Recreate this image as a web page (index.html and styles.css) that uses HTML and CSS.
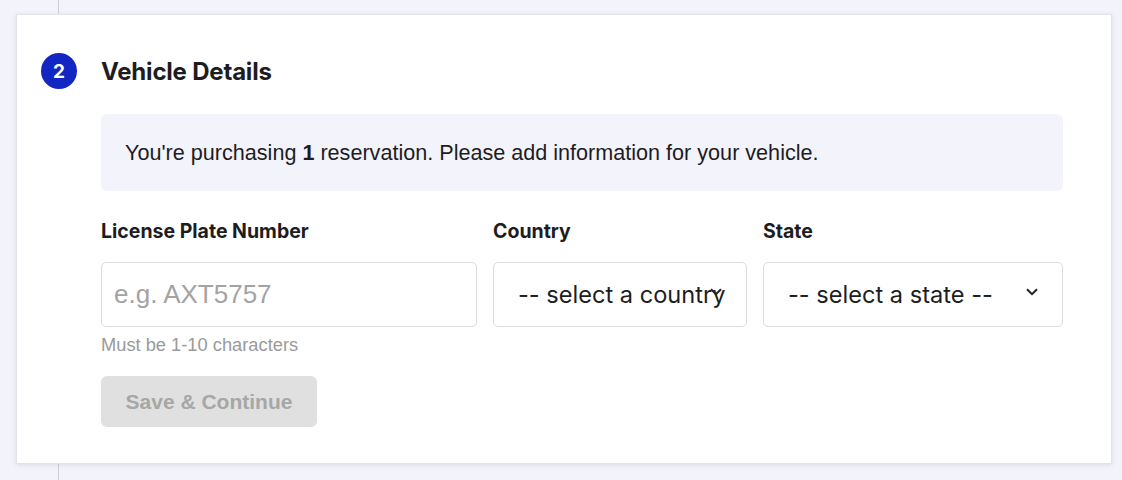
FILE: index.html
```html
<!DOCTYPE html>
<html>
<head>
<meta charset="utf-8">
<link rel="stylesheet" href="styles.css">
</head>
<body>
<div class="page">
  <div class="timeline"></div>
  <section class="card">
    <header class="step-head">
      <span class="step-num">2</span>
      <h2 class="step-title">Vehicle Details</h2>
    </header>
    <div class="notice">You're purchasing <b>1</b> reservation. Please add information for your vehicle.</div>
    <div class="fields">
      <div class="field">
        <label class="label">License Plate Number</label>
        <input class="control input" type="text" placeholder="e.g. AXT5757">
        <div class="hint">Must be 1-10 characters</div>
      </div>
      <div class="field">
        <label class="label">Country</label>
        <div class="control select">
          <span class="select-text">-- select a country</span>
          <svg class="chev" width="12" height="8" viewBox="0 0 12 8"><path d="M1 1.2l5 5 5-5" fill="none" stroke="#222" stroke-width="2"/></svg>
        </div>
      </div>
      <div class="field">
        <label class="label">State</label>
        <div class="control select">
          <span class="select-text">-- select a state --</span>
          <svg class="chev" width="12" height="8" viewBox="0 0 12 8"><path d="M1 1.2l5 5 5-5" fill="none" stroke="#222" stroke-width="2"/></svg>
        </div>
      </div>
    </div>
    <button class="btn" disabled>Save &amp; Continue</button>
  </section>
</div>
</body>
</html>
```
FILE: styles.css
```css
html, body {
  margin: 0;
  padding: 0;
  background: #f3f3fb;
  height: 480px;
  overflow: hidden;
}
.page {
  position: relative;
  padding: 14px 10px 0 16px;
  height: 480px;
  box-sizing: border-box;
}
.timeline {
  position: absolute;
  left: 58px;
  top: 0;
  bottom: 0;
  width: 1px;
  background: #cfcfd6;
}
.card {
  position: relative;
  background: #fff;
  border: 1px solid #e3e3ea;
  box-shadow: 0 1px 5px rgba(60, 60, 110, 0.12);
  padding: 38px 48px 36px 84px;
  font-family: "Liberation Sans", Arial, sans-serif;
  color: #222;
}
.step-head {
  display: flex;
  align-items: center;
  gap: 24px;
  margin-left: -60px;
  height: 36px;
}
.step-num {
  width: 36px;
  height: 36px;
  border-radius: 50%;
  background: #1226c4;
  color: #fff;
  font-family: Inter, "Liberation Sans", sans-serif;
  font-weight: 700;
  font-size: 19px;
  display: flex;
  align-items: center;
  justify-content: center;
}
.step-title {
  margin: 0;
  font-family: Inter, "Liberation Sans", sans-serif;
  font-weight: 700;
  font-size: 24px;
  color: #1d1d1f;
  letter-spacing: -0.2px;
}
.notice {
  margin-top: 25px;
  background: #f3f3fb;
  border-radius: 6px;
  height: 77px;
  padding: 0 24px;
  display: flex;
  align-items: center;
  font-size: 21.6px;
  color: #1d1d1f;
}
.notice b { margin: 0 6px; }
.fields {
  margin-top: 28px;
  display: grid;
  grid-template-columns: 376px 254px 1fr;
  gap: 16px;
}
.field {
  display: flex;
  flex-direction: column;
}
.label {
  font-family: Inter, "Liberation Sans", sans-serif;
  font-weight: 700;
  font-size: 19.5px;
  color: #1d1d1f;
  height: 24px;
  line-height: 24px;
  margin-bottom: 19px;
}
.control {
  box-sizing: border-box;
  height: 65px;
  border: 1px solid #dcdcdc;
  border-radius: 5px;
  background: #fff;
}
.input {
  width: 100%;
  padding: 0 12px;
  font-family: "Liberation Sans", Arial, sans-serif;
  font-size: 26px;
  color: #222;
  outline: none;
}
.input::placeholder { color: #a3a3a3; }
.hint {
  margin-top: 7px;
  font-size: 18.3px;
  line-height: 21px;
  color: #9a9a9a;
}
.select {
  display: flex;
  align-items: center;
  padding: 0 24px;
  position: relative;
}
.select-text {
  font-family: Inter, "Liberation Sans", sans-serif;
  font-size: 23.6px;
  color: #1d1d1f;
  white-space: nowrap;
}
.chev {
  position: absolute;
  right: 24px;
  top: 25px;
}
.btn {
  margin-top: 21px;
  width: 216px;
  height: 51px;
  border: 0;
  border-radius: 6px;
  background: #e0e0e0;
  color: #a7a7a7;
  font-family: "Liberation Sans", Arial, sans-serif;
  font-weight: 700;
  font-size: 21px;
  display: block;
}
```
